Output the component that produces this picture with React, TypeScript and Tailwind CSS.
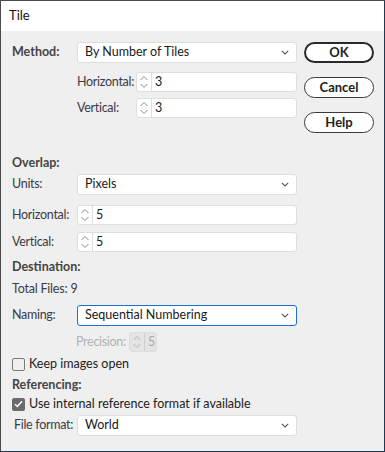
import type { ReactNode } from "react";

const font = { fontFamily: 'Lato, "Noto Sans", sans-serif' };

function Chevron() {
  return (
    <svg width="8" height="5" viewBox="0 0 8 5" className="shrink-0">
      <path d="M0.8 0.8 L4 4 L7.2 0.8" fill="none" stroke="#555" strokeWidth="1.1" />
    </svg>
  );
}

function SpinIcon({ color = "#8a8a8a" }: { color?: string }) {
  return (
    <svg width="10" height="14" viewBox="0 0 10 14">
      <path d="M1.5 5 L5 1.5 L8.5 5" fill="none" stroke={color} strokeWidth="1" />
      <path d="M1.5 9 L5 12.5 L8.5 9" fill="none" stroke={color} strokeWidth="1" />
    </svg>
  );
}

function Select({
  value,
  focused = false,
  className = "",
}: {
  value: string;
  focused?: boolean;
  className?: string;
}) {
  return (
    <div
      className={`flex h-[21px] w-[220px] items-center justify-between rounded-[3px] border bg-white pl-[7px] pr-[7px] text-[12.5px] text-[#1a1a1a] ${
        focused ? "border-[#1f6fd6]" : "border-[#dedede]"
      } ${className}`}
    >
      <span className="whitespace-nowrap">{value}</span>
      <Chevron />
    </div>
  );
}

function Spinner({
  value,
  width,
  disabled = false,
}: {
  value: string;
  width: string;
  disabled?: boolean;
}) {
  return (
    <div
      className={`flex h-[20px] items-center rounded-[3px] border ${width} ${
        disabled ? "border-[#dcdcdc] bg-[#e4e4e4]" : "border-[#dedede] bg-white"
      }`}
    >
      <div
        className={`flex h-full w-[15px] items-center justify-center border-r ${
          disabled ? "border-[#cfcfcf]" : "border-[#dedede]"
        }`}
      >
        <SpinIcon color={disabled ? "#b5b5b5" : "#8a8a8a"} />
      </div>
      <span className={`pl-[3px] text-[12.5px] ${disabled ? "text-[#a8a8a8]" : "text-[#1a1a1a]"}`}>
        {value}
      </span>
    </div>
  );
}

function Row({
  label,
  labelWidth,
  children,
  bold = false,
  className = "",
}: {
  label: string;
  labelWidth: string;
  children: ReactNode;
  bold?: boolean;
  className?: string;
}) {
  return (
    <div className={`flex items-center ${className}`}>
      <span
        className={`${labelWidth} shrink-0 whitespace-nowrap text-[12.5px] ${
          bold ? "font-bold text-[#444]" : "tracking-[-0.3px] text-[#3b3b46]"
        }`}
      >
        {label}
      </span>
      {children}
    </div>
  );
}

function DialogButton({ children, primary = false, className = "" }: { children: ReactNode; primary?: boolean; className?: string }) {
  return (
    <button
      type="button"
      className={`flex h-[21px] w-[70px] items-center justify-center rounded-full bg-white text-[13px] font-bold text-[#222] ${
        primary ? "border-2 border-[#2a2a2a]" : "border border-[#3a3a3a]"
      } ${className}`}
    >
      {children}
    </button>
  );
}

function Heading({ children, className = "" }: { children: ReactNode; className?: string }) {
  return (
    <div className={`h-[16px] whitespace-nowrap text-[12.5px] font-bold leading-[16px] text-[#444] ${className}`}>
      {children}
    </div>
  );
}

function Checkbox({ checked, label, className = "" }: { checked: boolean; label: string; className?: string }) {
  return (
    <div className={`flex h-[16px] items-center ${className}`}>
      {checked ? (
        <span className="flex h-[13px] w-[13px] items-center justify-center rounded-[2px] bg-[#6a6a6a]">
          <svg width="9" height="8" viewBox="0 0 9 8">
            <path d="M1 4.2 L3.4 6.5 L8 1.3" fill="none" stroke="#fff" strokeWidth="1.5" />
          </svg>
        </span>
      ) : (
        <span className="h-[13px] w-[13px] rounded-[2px] border border-[#7a7a7a] bg-[#efefef]" />
      )}
      <span className="ml-[4px] whitespace-nowrap text-[12.5px] text-[#222]">{label}</span>
    </div>
  );
}

export default function App() {
  return (
    <div
      style={font}
      className="flex h-[452px] w-[385px] flex-col border border-[#4a4a4a] border-r-[#1d3a55] border-b-[#1d3a55] bg-[#efefef]"
    >
      <div className="flex h-[30px] shrink-0 items-center bg-white pl-[8px] text-[13px] text-[#111]">Tile</div>

      <div className="flex flex-col pl-[11px]">
        <div className="mt-[11px] flex">
          <div className="flex w-[285px] flex-col">
            <Row label="Method:" labelWidth="w-[65px]" bold>
              <Select value="By Number of Tiles" />
            </Row>
            <Row label="Horizontal:" labelWidth="w-[59px]" className="ml-[65px] mt-[9px]">
              <Spinner value="3" width="w-[161px]" />
            </Row>
            <Row label="Vertical:" labelWidth="w-[59px]" className="ml-[65px] mt-[6px]">
              <Spinner value="3" width="w-[161px]" />
            </Row>
          </div>
          <div className="ml-[7px] flex flex-col">
            <DialogButton primary>OK</DialogButton>
            <DialogButton className="mt-[14px]">Cancel</DialogButton>
            <DialogButton className="mt-[14px]">Help</DialogButton>
          </div>
        </div>

        <Heading className="mt-[22px]">Overlap:</Heading>
        <Row label="Units:" labelWidth="w-[65px]" className="mt-[3px]">
          <Select value="Pixels" />
        </Row>
        <Row label="Horizontal:" labelWidth="w-[65px]" className="mt-[10px]">
          <Spinner value="5" width="w-[220px]" />
        </Row>
        <Row label="Vertical:" labelWidth="w-[65px]" className="mt-[7px]">
          <Spinner value="5" width="w-[220px]" />
        </Row>

        <Heading className="mt-[7px]">Destination:</Heading>
        <div className="mt-[6px] h-[16px] text-[12.5px] leading-[16px] tracking-[-0.2px] text-[#3b3b46]">Total Files: 9</div>
        <Row label="Naming:" labelWidth="w-[65px]" className="mt-[8px]">
          <Select value="Sequential Numbering" focused />
        </Row>
        <div className="ml-[64px] mt-[6px] flex items-center">
          <span className="w-[53px] whitespace-nowrap text-[12.5px] tracking-[-0.3px] text-[#b3b3b3]">Precision:</span>
          <Spinner value="5" width="w-[28px]" disabled />
        </div>
        <Checkbox checked={false} label="Keep images open" className="mt-[4px]" />
        <Heading className="mt-[5px]">Referencing:</Heading>
        <Checkbox checked label="Use internal reference format if available" className="mt-[3px]" />
        <Row label="File format:" labelWidth="w-[65px] pl-[2px]" className="mt-[3px]">
          <Select value="World" />
        </Row>
      </div>
    </div>
  );
}
